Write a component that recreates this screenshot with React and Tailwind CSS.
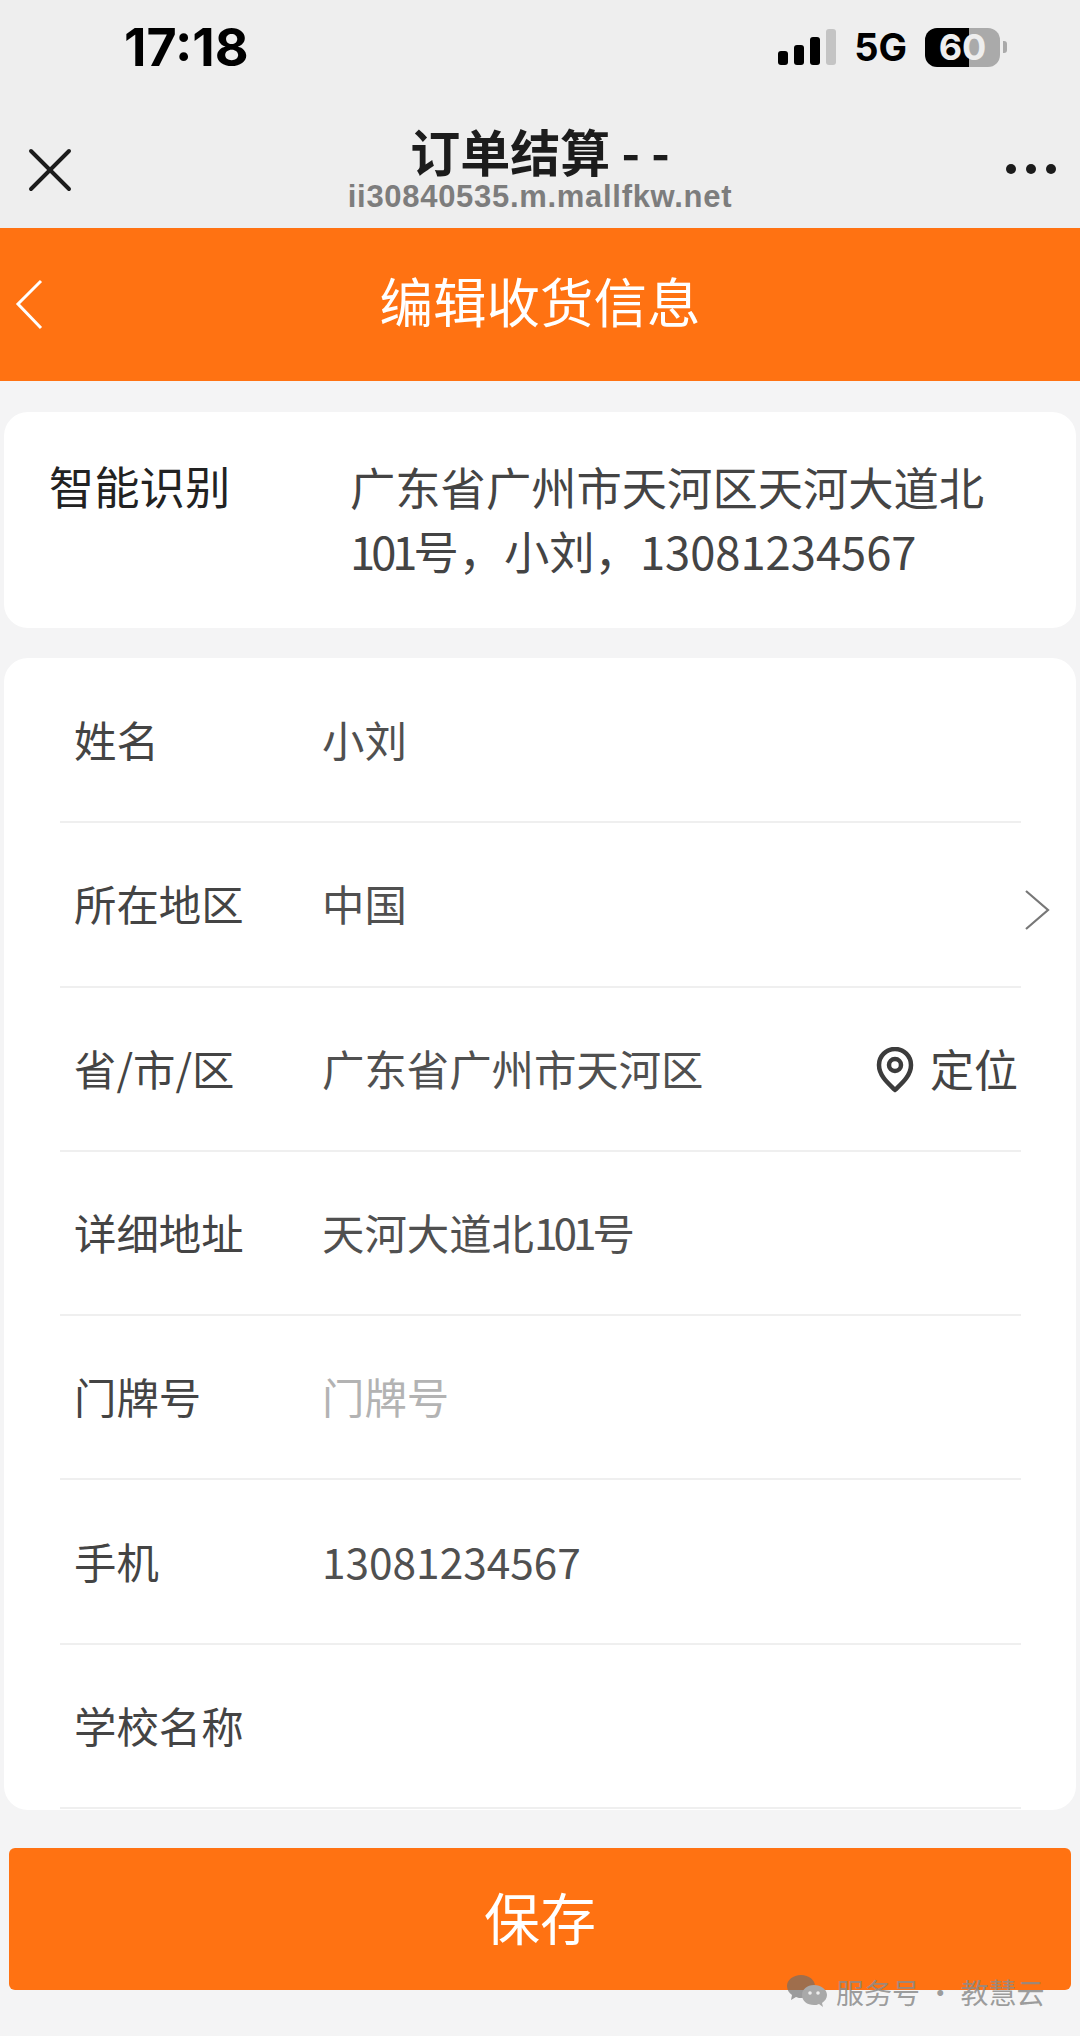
import { X } from 'lucide-react';

const cjk = '[font-family:"Noto_Sans_CJK_SC","Noto_Sans",sans-serif]';

function StatusBar() {
  return (
    <div className="flex h-[100px] items-end justify-between pb-[26px] pl-[124px] pr-[73px]">
      <span className="text-[52px] leading-[52px] font-bold text-black [font-family:Inter,sans-serif]">17:18</span>
      <div className="flex items-center pb-[4px]">
        <div className="flex items-end gap-[6px]">
          <div className="h-[14px] w-[10px] rounded-[3px] bg-black"></div>
          <div className="h-[20px] w-[10px] rounded-[3px] bg-black"></div>
          <div className="h-[28px] w-[10px] rounded-[3px] bg-black"></div>
          <div className="h-[36px] w-[10px] rounded-[3px] bg-[#c4c4c4]"></div>
        </div>
        <span className="ml-[18px] text-[38px] leading-[46px] font-bold text-black [font-family:Inter,sans-serif]">5G</span>
        <div className="relative ml-[18px] flex h-[39px] w-[75px]">
          <div className="h-full w-[44px] rounded-l-[12px] bg-black"></div>
          <div className="h-full w-[31px] rounded-r-[12px] bg-[#aaaaaa]"></div>
          <span className="absolute left-0 right-0 top-[-3px] text-center text-[36px] leading-[44px] font-bold text-[#eeeeee] [font-family:Inter,sans-serif]">60</span>
        </div>
        <div className="ml-[3px] h-[12px] w-[4px] rounded-r-[3px] bg-[#aaaaaa]"></div>
      </div>
    </div>
  );
}

function NavBar() {
  return (
    <div className="relative h-[128px]">
      <X className="absolute left-[12px] top-[32px] h-[76px] w-[76px] text-[#1c1c1c]" strokeWidth={1.25} />
      <div className="flex flex-col items-center pt-[23px]">
        <span className="text-[50px] leading-[54px] font-bold text-[#1c1c1c] [font-family:'Noto_Sans_CJK_SC',sans-serif]">订单结算 - -</span>
        <span className="mt-[3px] text-[31px] leading-[34px] font-bold tracking-[0.7px] text-[#7d7d7d] [font-family:'Liberation_Sans',sans-serif]">ii30840535.m.mallfkw.net</span>
      </div>
      <div className="absolute right-[24px] top-[64px] flex gap-[10px]">
        <div className="h-[10px] w-[10px] rounded-full bg-[#1c1c1c]"></div>
        <div className="h-[10px] w-[10px] rounded-full bg-[#1c1c1c]"></div>
        <div className="h-[10px] w-[10px] rounded-full bg-[#1c1c1c]"></div>
      </div>
    </div>
  );
}

function Row({ label, children, right }) {
  return (
    <div className="ml-[56px] mr-[55px] flex h-[164.3px] items-center border-b-2 border-[#efefef] pb-[2px]">
      <span className="ml-[14px] w-[248px] text-[42.4px] leading-[50px] text-[#444444]">{label}</span>
      <div className="flex-1 text-[42.4px] leading-[50px] text-[#505050]">{children}</div>
      {right}
    </div>
  );
}

export default function App() {
  return (
    <div className={`relative h-[2036px] w-[1080px] overflow-hidden bg-[#f4f4f5] ${cjk}`}>
      <div className="bg-[#eeeeee]">
        <StatusBar />
        <NavBar />
      </div>

      {/* orange header */}
      <div className="relative flex h-[153px] items-center justify-center bg-[#ff7212] pb-[10px]">
        <svg className="absolute left-[14px] top-[50px]" width="30" height="52" viewBox="0 0 30 52" fill="none">
          <path d="M27 3 L4 26 L27 50" stroke="#fff" strokeWidth="3" />
        </svg>
        <span className="text-[53.5px] leading-[64px] text-white">编辑收货信息</span>
      </div>

      {/* smart recognition */}
      <div className="mx-[4px] mt-[31px] flex h-[216px] rounded-[24px] bg-white pt-[42px]">
        <span className="ml-[45px] w-[301px] text-[45.3px] leading-[62px] text-[#222222]">智能识别</span>
        <p className="w-[660px] text-[45.3px] leading-[64px] text-[#444444]">
          广东省广州市天河区天河大道北<span className="tracking-[-4px]">101</span>号，小刘，13081234567
        </p>
      </div>

      {/* form */}
      <div className="mx-[4px] mt-[30px] h-[1152px] overflow-hidden rounded-[24px] bg-white pb-[4px] pt-[1px]">
        <Row label="姓名">小刘</Row>
        <Row label="所在地区">中国</Row>
        <Row
          label="省/市/区"
          right={
            <div className="mr-[3px] flex items-center">
              <svg className="mt-[4px]" width="38" height="46" viewBox="0 0 38 46" fill="none" stroke="#3c3c3c" strokeWidth="4.5">
                <path d="M19 43 C13 37 3 29 3 18 A16 16 0 0 1 35 18 C35 29 25 37 19 43 Z" strokeLinejoin="round" />
                <circle cx="19" cy="18" r="6" />
              </svg>
              <span className="ml-[16px] text-[44px] leading-[50px] text-[#444444]">定位</span>
            </div>
          }
        >
          广东省广州市天河区
        </Row>
        <Row label="详细地址">天河大道北<span className="tracking-[-4px]">101</span>号</Row>
        <Row label="门牌号"><span className="text-[#b3b3b3]">门牌号</span></Row>
        <Row label="手机">13081234567</Row>
        <Row label="学校名称"></Row>
      </div>

      <svg className="absolute left-[1023px] top-[889px]" width="28" height="42" viewBox="0 0 28 42" fill="none">
        <path d="M3 2 L25 21 L3 40" stroke="#777" strokeWidth="2.2" />
      </svg>

      <div className="mx-[9px] mt-[38px] flex h-[142px] items-center justify-center rounded-[6px] bg-[#ff7212] pb-[6px]">
        <span className="text-[56px] leading-[70px] text-white">保存</span>
      </div>

      {/* watermark */}
      <div className="absolute left-[786px] top-[1974px] flex items-center">
        <svg width="42" height="36" viewBox="0 0 42 36">
          <path d="M15 1 C7 1 1 6 1 12 C1 16 3 19 6 21 L5 26 L10 23 C12 24 14 24 15 24 C24 24 29 18 29 12 C29 6 23 1 15 1 Z" fill="#6b6b6b" fillOpacity="0.65" />
          <path d="M28 11 C21 11 16 15.5 16 21 C16 27 21 31 28 31 C30 31 31 31 33 30 L37 33 L36 29 C39 27 41 24 41 21 C41 15.5 35 11 28 11 Z" fill="#a9a9a9" />
          <circle cx="24" cy="19" r="1.8" fill="#eee" />
          <circle cx="32" cy="19" r="1.8" fill="#eee" />
        </svg>
        <span className="ml-[8px] text-[28px] leading-[36px] text-[#8c8c8c]/85">服务号 · 教慧云</span>
      </div>
    </div>
  );
}
